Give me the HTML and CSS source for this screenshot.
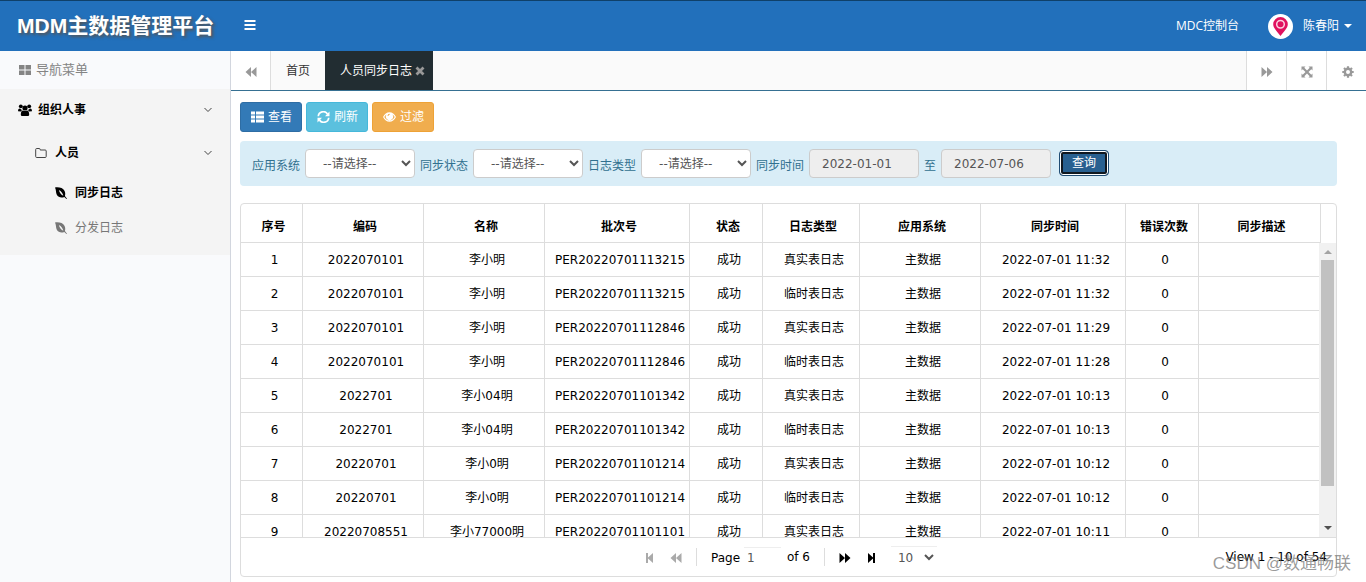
FILE: index.html
```html
<!DOCTYPE html>
<html lang="zh-CN">
<head>
<meta charset="utf-8">
<title>MDM主数据管理平台</title>
<link rel="stylesheet" href="styles.css">
</head>
<body>
<svg class="sprite" aria-hidden="true">
  <symbol id="i-back" viewBox="0 0 12 12"><path d="M6 1v10L0.500 6zM11.500 1v10L6 6z"/></symbol>
  <symbol id="i-fwd" viewBox="0 0 12 12"><path d="M0.500 1v10L6 6zM6 1v10l5.500-5z"/></symbol>
  <symbol id="i-first" viewBox="0 0 12 12"><path d="M2 1h2v4.500L9 1v10L4 6.500V11H2z"/></symbol>
  <symbol id="i-last" viewBox="0 0 12 12"><path d="M10 1H8v4.500L3 1v10l5-4.500V11h2z"/></symbol>
  <symbol id="i-leaf" viewBox="0 0 12 12"><path fill-rule="evenodd" d="M0 .5C4 0 8 .8 9.600 4c.9 1.900.7 3.700.3 5L12 11.800l-.5.300L9.300 10C6.500 11.200 3.300 10.600 1.800 7.800.7 5.600 1.200 2.500 0 .5zM4 3c.3 2.300 1.800 4.600 4.300 5.800C7.800 6.300 6.200 4.300 4 3z"/></symbol>
  <symbol id="i-down" viewBox="0 0 10 10"><path d="M1.500 3 5 6.500 8.500 3" fill="none" stroke="currentColor"/></symbol>
</svg>

<header class="topbar">
  <div class="brand">MDM主数据管理平台</div>
  <button class="plain menu-toggle" aria-label="菜单"><svg class="icon" viewBox="0 0 12 12"><path d="M.5 0h11v2H.5zM.5 4h11v2H.5zM.5 8h11v2H.5z"/></svg></button>
  <nav class="top-links">
    <a href="#">MDC控制台</a>
    <a href="#" class="user">
      <svg class="avatar" viewBox="0 0 25 25"><circle cx="12.500" cy="12.500" r="12.500" fill="#fff"/><path fill="#e0115f" d="M12.500 3a7.300 7.300 0 0 1 7.300 7.300c0 4-4.300 7.500-7.300 11.700-3-4.200-7.300-7.700-7.300-11.700A7.300 7.300 0 0 1 12.500 3z"/><circle cx="12.500" cy="10.200" r="3.800" fill="#e0115f" stroke="#fbd0e0" stroke-width="1.500"/></svg>
      <span>陈春阳</span><i class="caret"></i>
    </a>
  </nav>
</header>

<div class="shell">
  <aside class="sidebar">
    <div class="side-title"><svg class="icon" viewBox="0 0 12 12"><path d="M0 1h5.500v4.500H0zM6.500 1H12v4.500H6.500zM0 6.500h5.500V11H0zM6.500 6.500H12V11H6.500z"/></svg>导航菜单</div>
    <nav class="menu">
      <a href="#" class="item level1"><svg class="icon" viewBox="0 0 14 12"><circle cx="2.800" cy="2.300" r="1.900"/><circle cx="11.200" cy="2.300" r="1.900"/><circle cx="7" cy="4" r="2.600"/><path d="M0 7.200C0 5.300.9 4.600 1.800 4.600L4 6 3 7.400zM14 7.200c0-1.900-.9-2.600-1.800-2.600L10 6l1 1.400zM2.800 10.500C2.800 7.800 3.800 6.500 5 6.500q2 1 4 0c1.200 0 2.200 1.300 2.200 4 0 1-.7 1.500-1.700 1.500h-5c-1 0-1.700-.5-1.700-1.500z"/></svg><span>组织人事</span><svg class="chev"><use href="#i-down"/></svg></a>
      <a href="#" class="item level2"><svg class="icon" viewBox="0 0 12 12"><path fill="none" stroke="currentColor" d="M.7 9.500v-7q0-1 1-1h2.500q1 0 1 1V3h5q1 0 1 1v5.500q0 1-1 1H1.700q-1 0-1-1z"/></svg><span>人员</span><svg class="chev"><use href="#i-down"/></svg></a>
      <a href="#" class="item level3 current"><svg class="icon"><use href="#i-leaf"/></svg><span>同步日志</span></a>
      <a href="#" class="item level3"><svg class="icon"><use href="#i-leaf"/></svg><span>分发日志</span></a>
    </nav>
  </aside>

  <main class="main">
    <div class="tabs">
      <button class="tab-btn" aria-label="左移"><svg class="icon"><use href="#i-back"/></svg></button>
      <a href="#" class="tab">首页</a>
      <a href="#" class="tab active">人员同步日志<svg class="close" viewBox="0 0 10 10"><path d="m1.500 1.500 7 7M8.500 1.500l-7 7" stroke="currentColor" stroke-width="2.800"/></svg></a>
      <span class="fill"></span>
      <button class="tab-btn right" aria-label="右移"><svg class="icon"><use href="#i-fwd"/></svg></button>
      <button class="tab-btn right" aria-label="全屏"><svg class="icon" viewBox="0 0 12 12"><path d="M.5.5h4L3.300 1.700 6 4.500l2.700-2.800L7.500.5h4v4l-1.200-1.200L7.500 6l2.800 2.700 1.200-1.200v4h-4l1.200-1.200L6 7.500l-2.700 2.800 1.200 1.200h-4v-4l1.200 1.200L4.500 6 1.700 3.300.5 4.500z"/></svg></button>
      <button class="tab-btn right gear" aria-label="设置"><svg class="icon" viewBox="0 0 12 12"><circle cx="6" cy="6" r="3.200" fill="none" stroke="currentColor" stroke-width="2.400"/><path d="M6 .3v2M6 9.700v2M.3 6h2M9.700 6h2M2 2l1.300 1.300M8.700 8.700 10 10M10 2 8.700 3.300M3.300 8.700 2 10" stroke="currentColor" stroke-width="2.200"/></svg></button>
    </div>

    <div class="content">
      <div class="toolbar">
        <button class="btn blue"><svg class="icon" viewBox="0 0 13 12"><path d="M0 .5h4v3H0zM5 .5h8v3H5zM0 4.500h4v3H0zM5 4.500h8v3H5zM0 8.500h4v3H0zM5 8.500h8v3H5z"/></svg>查看</button>
        <button class="btn cyan"><svg class="icon" viewBox="0 0 13 12"><g fill="none" stroke="currentColor" stroke-width="1.700"><path d="M1.300 5.300A5 5 0 0 1 10.500 3M11.700 6.700A5 5 0 0 1 2.500 9"/></g><path d="M12.500.5v4.700H8zM.5 11.500V6.800H5z"/></svg>刷新</button>
        <button class="btn orange"><svg class="icon" viewBox="0 0 13 12"><path fill-rule="evenodd" d="M0 6c1.500-3 3.800-4.800 6.500-4.800S11.500 3 13 6c-1.500 3-3.800 4.800-6.500 4.800S1.500 9 0 6zM1.300 6c1.200 2.200 3 3.600 5.200 3.600S10.500 8.200 11.700 6c-.6-1.100-1.400-1.900-2.300-2.500a3.600 3.600 0 1 1-5.800 0C2.700 4.100 1.900 4.900 1.300 6zM4.500 5h1q0-1.200 1.200-1.200v-1Q4.500 2.800 4.500 5z"/></svg>过滤</button>
      </div>

      <form class="query">
        <label for="app">应用系统</label>
        <select id="app"><option>--请选择--</option></select>
        <label for="state">同步状态</label>
        <select id="state"><option>--请选择--</option></select>
        <label for="kind">日志类型</label>
        <select id="kind"><option>--请选择--</option></select>
        <label for="from">同步时间</label>
        <input id="from" type="text" value="2022-01-01" readonly>
        <label for="to">至</label>
        <input id="to" type="text" value="2022-07-06" readonly>
        <button type="button" class="search">查询</button>
      </form>

      <section class="grid">
        <div class="grid-head">
          <table>
            <colgroup><col class="w62"><col class="w121"><col class="w121"><col class="w145"><col class="w73"><col class="w97"><col class="w121"><col class="w145"><col class="w73"><col></colgroup>
            <thead><tr><th>序号</th><th>编码</th><th>名称</th><th>批次号</th><th>状态</th><th>日志类型</th><th>应用系统</th><th>同步时间</th><th>错误次数</th><th>同步描述</th></tr></thead>
          </table>
        </div>
        <div class="grid-body">
          <div class="rows">
            <table>
              <colgroup><col class="w62"><col class="w121"><col class="w121"><col class="w145"><col class="w73"><col class="w97"><col class="w121"><col class="w145"><col class="w73"><col></colgroup>
              <tbody>
                <tr><td>1</td><td>2022070101</td><td>李小明</td><td>PER20220701113215</td><td>成功</td><td>真实表日志</td><td>主数据</td><td>2022-07-01 11:32</td><td>0</td><td></td></tr>
                <tr><td>2</td><td>2022070101</td><td>李小明</td><td>PER20220701113215</td><td>成功</td><td>临时表日志</td><td>主数据</td><td>2022-07-01 11:32</td><td>0</td><td></td></tr>
                <tr><td>3</td><td>2022070101</td><td>李小明</td><td>PER20220701112846</td><td>成功</td><td>真实表日志</td><td>主数据</td><td>2022-07-01 11:29</td><td>0</td><td></td></tr>
                <tr><td>4</td><td>2022070101</td><td>李小明</td><td>PER20220701112846</td><td>成功</td><td>临时表日志</td><td>主数据</td><td>2022-07-01 11:28</td><td>0</td><td></td></tr>
                <tr><td>5</td><td>2022701</td><td>李小04明</td><td>PER20220701101342</td><td>成功</td><td>真实表日志</td><td>主数据</td><td>2022-07-01 10:13</td><td>0</td><td></td></tr>
                <tr><td>6</td><td>2022701</td><td>李小04明</td><td>PER20220701101342</td><td>成功</td><td>临时表日志</td><td>主数据</td><td>2022-07-01 10:13</td><td>0</td><td></td></tr>
                <tr><td>7</td><td>20220701</td><td>李小0明</td><td>PER20220701101214</td><td>成功</td><td>真实表日志</td><td>主数据</td><td>2022-07-01 10:12</td><td>0</td><td></td></tr>
                <tr><td>8</td><td>20220701</td><td>李小0明</td><td>PER20220701101214</td><td>成功</td><td>临时表日志</td><td>主数据</td><td>2022-07-01 10:12</td><td>0</td><td></td></tr>
                <tr><td>9</td><td>20220708551</td><td>李小77000明</td><td>PER20220701101101</td><td>成功</td><td>真实表日志</td><td>主数据</td><td>2022-07-01 10:11</td><td>0</td><td></td></tr>
              </tbody>
            </table>
          </div>
          <div class="scrollbar" aria-hidden="true"><i class="arrow up"></i><div class="track"><div class="thumb"></div></div><i class="arrow down"></i></div>
        </div>
        <footer class="pager">
          <div class="pages">
            <button class="plain off" aria-label="首页"><svg class="icon"><use href="#i-first"/></svg></button>
            <button class="plain off" aria-label="上一页"><svg class="icon"><use href="#i-back"/></svg></button>
            <i class="sep"></i>
            <label class="page-label">Page <input type="text" value="1"></label>
            <span class="total">of 6</span>
            <i class="sep"></i>
            <button class="plain" aria-label="下一页"><svg class="icon"><use href="#i-fwd"/></svg></button>
            <button class="plain" aria-label="末页"><svg class="icon"><use href="#i-last"/></svg></button>
            <select aria-label="每页条数"><option>10</option></select>
          </div>
          <div class="summary">View 1 - 10 of 54</div>
        </footer>
      </section>
    </div>
  </main>
</div>
<div class="watermark">CSDN @数通畅联</div>
</body>
</html>
```
FILE: styles.css
```css
* { box-sizing: border-box; }
body {
  margin: 0;
  min-height: 100vh;
  display: flex;
  flex-direction: column;
  font: 12px/18px "DejaVu Sans", "Noto Sans CJK SC", sans-serif;
  color: #000;
  background: #fff;
}
a { color: inherit; text-decoration: none; }
button, input, select { font: inherit; color: inherit; }
svg { fill: currentColor; flex: none; }
.sprite { position: absolute; width: 0; height: 0; }
.icon { width: 12px; height: 12px; display: block; }
.plain { border: 0; background: none; padding: 0; }

.topbar {
  display: flex;
  align-items: center;
  height: 51px;
  border-top: 1px solid #0f4069;
  background: #2270bb;
  color: #fff;
}
.brand {
  width: 230px;
  padding-left: 17px;
  font: bold 21px/30px "Liberation Sans", "Noto Sans CJK SC", sans-serif;
  text-shadow: 2px 2px 3px #555;
  white-space: nowrap;
}
.menu-toggle { margin-left: 14px; }
.top-links {
  margin-left: auto;
  padding-right: 14px;
  display: flex;
  align-items: center;
  gap: 29px;
  font-family: "Open Sans", "Noto Sans CJK SC", sans-serif;
}
.user { display: flex; align-items: center; }
.avatar { width: 25px; height: 25px; margin-right: 10px; }
.caret { border: 4px solid transparent; border-top-color: #fff; border-bottom: 0; margin-left: 5px; }

.shell { flex: 1; display: flex; }
.sidebar { width: 231px; flex: none; background: #f9fafc; border-right: 1px solid #d2d6de; }
.side-title { display: flex; align-items: center; gap: 5px; height: 38px; padding-left: 19px; font-size: 13px; color: #848484; }
.menu { background: #f4f4f4; padding-bottom: 10px; }
.item { display: flex; align-items: center; gap: 8px; }
.item span { flex: 1; }
.chev { width: 10px; height: 10px; margin-right: 17px; color: #444; }
.level1 { height: 42px; padding-left: 18px; font-weight: bold; gap: 6px; }
.level1 .icon { width: 14px; }
.level2 { height: 44px; padding-left: 35px; font-weight: bold; }
.level2 .icon { color: #444; }
.level3 { height: 35px; padding-left: 55px; color: #777; }
.current { color: #000; font-weight: bold; }

.main { flex: 1; min-width: 0; }
.tabs { display: flex; height: 40px; background: #fafafa; border-bottom: 1px solid #367092; }
.tab-btn {
  width: 40px;
  display: grid;
  place-items: center;
  padding: 2px 0 0;
  border: 0;
  border-right: 1px solid #ddd;
  background: #fff;
  color: #999;
}
.tab-btn.right { border-right: 0; border-left: 1px solid #ddd; }
.tab-btn.gear { padding-left: 3px; }
.tab { display: flex; align-items: center; padding: 0 15px; color: #333; }
.tab.active { background: #222d32; color: #fff; padding-right: 8px; }
.close { width: 10px; height: 10px; margin-left: 3px; color: #999; }
.fill { flex: 1; }

.content { padding: 11px 29px 5px 9px; }
.toolbar { display: flex; gap: 4px; }
.btn {
  display: flex;
  align-items: center;
  gap: 4px;
  height: 30px;
  padding: 0 9px 0 10px;
  border: 1px solid;
  border-radius: 3px;
  color: #fff;
}
.btn .icon { width: 13px; }
.blue { background: #337ab7; border-color: #2e6da4; }
.cyan { background: #5bc0de; border-color: #46b8da; }
.orange { background: #f0ad4e; border-color: #eea236; }

.query {
  display: flex;
  align-items: center;
  gap: 5px;
  margin-top: 9px;
  padding: 8px 12px;
  border-radius: 4px;
  background: #d9edf7;
  color: #31708f;
}
.query label { padding-top: 4px; }
.query select, .query input {
  width: 110px;
  height: 29px;
  border: 1px solid #ccc;
  border-radius: 4px;
  background: #fff;
  color: #555;
}
.query select { padding: 1px 0 0 13px; }
.query input { padding: 0 12px; background: #eee; }
.search {
  width: 50px;
  height: 26px;
  align-self: flex-start;
  margin: 1px 0 0 3px;
  padding: 0;
  border: 1px solid #204d74;
  border-radius: 4px;
  background: #286090;
  box-shadow: inset 0 0 0 1px #fff, inset 0 0 0 3px #101820;
  color: #fff;
}

.grid { margin-top: 17px; border: 1px solid #ddd; border-radius: 4px; }
table { width: 100%; table-layout: fixed; border-collapse: separate; border-spacing: 0; }
th, td { padding: 0; border-right: 1px solid #ddd; border-bottom: 1px solid #ddd; text-align: center; white-space: nowrap; }
th { height: 39px; padding: 7px 0 0 4px; font-weight: bold; }
td { height: 34px; padding-left: 6px; }
td:last-child { border-right: 0; }
.w62 { width: 62px; }
.w73 { width: 73px; }
.w97 { width: 97px; }
.w121 { width: 121px; }
.w145 { width: 145px; }
.grid-head { padding-right: 15px; }
.grid-body { display: flex; height: 295px; border-bottom: 1px solid #ddd; }
.rows { flex: 1; overflow: hidden; }
.scrollbar { width: 17px; display: flex; flex-direction: column; align-items: center; background: #f1f1f1; }
.track { flex: 1; width: 13px; }
.thumb { height: 87%; background: #c1c1c1; }
.arrow { border: 4px solid transparent; }
.arrow.up { border-top: 0; border-bottom-color: #a3a3a3; margin: 7px 0 6px; }
.arrow.down { border-bottom: 0; border-top-color: #505050; margin: 6px 0 7px; }

.pager { display: grid; grid-template-columns: 1fr auto 1fr; align-items: center; height: 38px; }
.pages { grid-column: 2; display: flex; align-items: center; gap: 14px; padding-left: 4px; }
.pages .icon { margin-top: 2px; }
.off { color: #aaa; }
.sep { width: 1px; height: 18px; background: #ddd; }
.page-label input { width: 37px; height: 20px; padding: 0 3px; border: 0; border-top: 1px solid #eee; background: none; color: #555; }
.total { margin-left: -8px; }
.pages select { width: 46px; height: 22px; padding: 0 0 0 3px; border: 0; border-top: 1px solid #eee; background: #fff; color: #555; }
.summary { grid-column: 3; justify-self: end; padding-right: 9px; }
.watermark {
  position: absolute;
  right: 15px;
  bottom: 6px;
  font: 17px/24px "Liberation Sans", "Noto Sans CJK SC", sans-serif;
  color: rgba(110, 110, 110, 0.7);
}
```
